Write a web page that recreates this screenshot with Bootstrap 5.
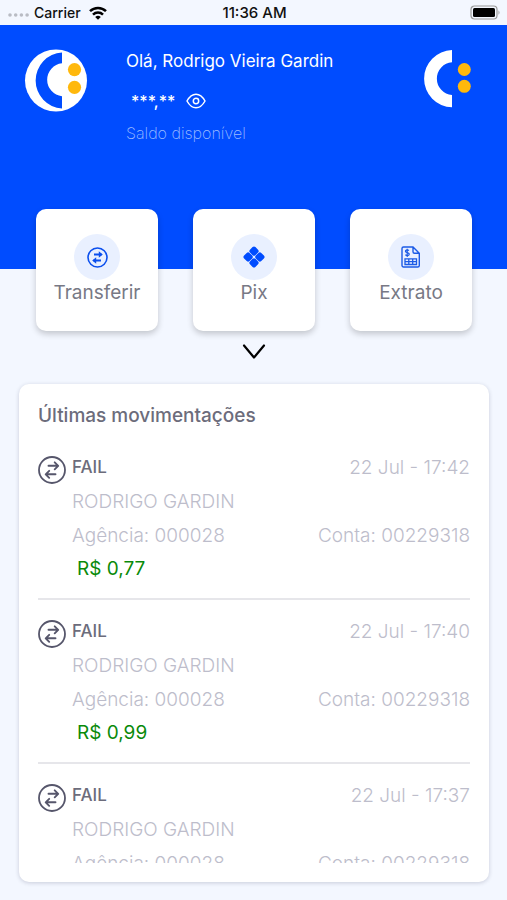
<!DOCTYPE html>
<html lang="pt-BR">
<head>
<meta charset="utf-8">
<meta name="viewport" content="width=device-width, initial-scale=1">
<title>Conta</title>
<link href="https://cdn.jsdelivr.net/npm/bootstrap@5.3.0/dist/css/bootstrap.min.css" rel="stylesheet">
<style>
  body { font-family: Inter, "Liberation Sans", sans-serif; background: #f3f7ff; }
  svg { display: block; flex: none; }
  .status-bar { height: 25px; font-size: 14px; line-height: 25px; font-weight: 500; color: #111; padding: 0 6px 0 8px; }
  .status-side { flex: 1 1 0; }
  .status-time { font-size: 15px; }
  .hero { background: #004cff; color: #fff; height: 244px; padding: 24px 36px 0 24px; }
  .greeting { font-size: 17px; line-height: 24px; padding-left: 38px; }
  .balance { height: 32px; margin-top: 12px; padding-left: 5px; gap: 11px; font-size: 16px; font-weight: 500; }
  .balance-label { font-size: 16px; line-height: 24px; margin-top: 4px; font-weight: 200; color: #9dbcff; }
  .actions { margin-top: -60px; padding: 0 35px 0 36px; gap: 35px; }
  .action-tile { flex: 1 1 0; aspect-ratio: 1; background: #fff; border-radius: 10px; color: #787985; font-size: 19px; line-height: 26px; box-shadow: 0 3px 6px rgba(0,0,0,.2); }
  .action-tile:hover { background: #f8faff; }
  .action-disc { width: 46px; height: 46px; border-radius: 50%; background: #e9f0ff; }
  .expand { margin: 11px auto 23px; }
  .history { margin: 0 18px 18px 19px; padding: 17px 19px 19px; border-radius: 10px; box-shadow: 0 1px 4px rgba(30,35,70,.2); min-height: 0; }
  .history-title { font-size: 19px; line-height: 30px; font-weight: 500; color: #6c6c7b; }
  .entries { min-height: 0; margin-top: 20px; }
  .entry { padding-bottom: 13px; margin-bottom: 15px; border-bottom: 2px solid #e6e6ea; gap: 6px; font-size: 19px; line-height: 34px; font-weight: 300; color: #bdbdcb; }
  .entry-icon { margin-top: 5px; }
  .entry-status { font-size: 17px; line-height: 32px; font-weight: 500; color: #6c6c7b; }
  .entry-amount { font-weight: 400; line-height: 32px; color: #0a8a0a; padding-left: 5px; }
</style>
<script src="https://cdn.jsdelivr.net/npm/bootstrap@5.3.0/dist/js/bootstrap.bundle.min.js" defer></script>
</head>
<body>
<svg width="0" height="0" class="position-absolute" aria-hidden="true">
  <symbol id="swap" viewBox="0 0 28 28">
    <g fill="none" stroke="currentColor" stroke-linecap="round" stroke-linejoin="round">
      <circle cx="14" cy="14" r="13" stroke-width="1.8"/>
      <path stroke-width="1.9" d="M10.500 9.800H20M16.700 6.300l3.500 3.500-3.500 3.500M17.500 18.300H8M11.200 14.800L7.700 18.300l3.500 3.500"/>
    </g>
  </symbol>
</svg>
<div class="vh-100 d-flex flex-column overflow-hidden">
  <div class="status-bar d-flex align-items-center">
    <div class="status-side d-flex align-items-center">
      <svg width="22" height="10" viewBox="0 0 22 10" fill="#b9bcc4"><circle cx="2" cy="7" r="1.8"/><circle cx="7.700" cy="7" r="1.8"/><circle cx="13.400" cy="7" r="1.8"/><circle cx="19.100" cy="7" r="1.8"/></svg>
      <span class="ms-1 me-2">Carrier</span>
      <svg width="18" height="14" viewBox="0 0 18 14" fill="none" stroke="#000" stroke-width="2.500"><path d="M1 5.200a11.500 11.500 0 0 1 16 0M4 8.600a7.200 7.200 0 0 1 10 0"/><path d="M9 13.800L6.200 11a4 4 0 0 1 5.600 0z" fill="#000" stroke="none"/></svg>
    </div>
    <span class="status-time">11:36 AM</span>
    <div class="status-side d-flex justify-content-end">
      <svg width="31" height="15" viewBox="0 0 31 15"><rect x="1" y="1" width="26" height="13" rx="3.500" fill="none" stroke="#999" stroke-width="1.200"/><rect x="3" y="3" width="22" height="9" rx="1.500"/><path d="M28.500 5.200q2 2.300 0 4.600z" fill="#999"/></svg>
    </div>
  </div>

  <header class="hero d-flex align-items-start flex-shrink-0">
    <svg width="64" height="64" viewBox="0 0 64 64" role="img" aria-label="Perfil">
      <circle cx="32" cy="31.500" r="31" fill="#fff"/>
      <path d="M38 3.500A28.050 28.050 0 0 0 38 59.500V47.300A16.650 16.650 0 0 1 38 14.200Z" fill="#004cff"/>
      <circle cx="50.500" cy="20.600" r="6.600" fill="#ffb80c"/><circle cx="50.500" cy="38.300" r="6.600" fill="#ffb80c"/>
    </svg>
    <div class="flex-grow-1">
      <div class="greeting">
        <div>Olá, Rodrigo Vieira Gardin</div>
        <div class="balance d-flex align-items-center">
          <span>***,**</span>
          <button type="button" class="btn p-0 border-0 text-white" aria-label="Mostrar saldo">
            <svg width="20" height="16" viewBox="0 0 20 16" fill="none" stroke="currentColor" stroke-width="1.500"><path d="M1 8C3.500 3.500 6.500 1.200 10 1.200S16.500 3.500 19 8C16.500 12.500 13.500 14.800 10 14.800S3.500 12.500 1 8Z"/><circle cx="10" cy="8" r="2.700"/></svg>
          </button>
        </div>
        <div class="balance-label">Saldo disponível</div>
      </div>
    </div>
    <svg width="48" height="60" viewBox="0 0 48 60" role="img" aria-label="Logotipo">
      <path d="M29 1A28.660 28.660 0 0 0 29 58.300V46A16.400 16.400 0 0 1 29 13.300Z" fill="#fff"/>
      <circle cx="41.300" cy="20.500" r="6.500" fill="#ffb80c"/><circle cx="41.300" cy="37.300" r="6.500" fill="#ffb80c"/>
    </svg>
  </header>

  <nav class="actions d-flex flex-shrink-0" aria-label="Ações">
    <button type="button" class="action-tile btn border-0 p-0 d-flex flex-column align-items-center justify-content-center">
      <span class="action-disc d-flex align-items-center justify-content-center"><svg width="21" height="21" viewBox="0 0 21 21" fill="none" stroke="#0b4fee" stroke-width="1.600"><circle cx="10.500" cy="10.500" r="9.500"/><path d="M7 7.500H14.500M14 13.500H6.500" stroke-width="1.800"/><path d="M11.800 4.300l4 3.200-4 3.200zM9.200 10.300L5.200 13.500l4 3.200z" fill="#0b4fee" stroke="none"/></svg></span>
      Transferir
    </button>
    <button type="button" class="action-tile btn border-0 p-0 d-flex flex-column align-items-center justify-content-center">
      <span class="action-disc d-flex align-items-center justify-content-center"><svg width="22" height="22" viewBox="0 0 22 22" fill="#004cff"><g transform="rotate(45 11 11)"><rect x="3" y="3" width="7.700" height="7.700" rx="2"/><rect x="11.300" y="3" width="7.700" height="7.700" rx="2"/><rect x="3" y="11.300" width="7.700" height="7.700" rx="2"/><rect x="11.300" y="11.300" width="7.700" height="7.700" rx="2"/></g></svg></span>
      Pix
    </button>
    <button type="button" class="action-tile btn border-0 p-0 d-flex flex-column align-items-center justify-content-center">
      <span class="action-disc d-flex align-items-center justify-content-center"><svg width="20" height="22" viewBox="0 0 20 22" fill="none" stroke="#1c5be6" stroke-width="1.400"><path d="M2.500 1H12l6.300 6.300V19.500a1.500 1.500 0 0 1-1.500 1.500H2.500A1.500 1.500 0 0 1 1 19.500v-17A1.500 1.500 0 0 1 2.500 1ZM12 1v4.800a1.500 1.500 0 0 0 1.500 1.500h4.800"/><path d="M8 4.500Q5.800 3 4.600 4.600 4 6.200 6.200 6.700 8.700 7.200 8 8.900 6.500 10.300 4.300 8.800M6.200 2.700V11" stroke-width="1.200"/><path d="M4 12.800h11.500v5.700H4ZM4 15.700h11.500M7.800 12.800v5.700M11.700 12.800v5.700" stroke-width="1.300"/></svg></span>
      Extrato
    </button>
  </nav>

  <button type="button" class="expand btn p-0 border-0 flex-shrink-0 d-flex" aria-label="Mais opções">
    <svg width="24" height="19" viewBox="0 0 24 19" fill="none" stroke="#000" stroke-width="2.200" stroke-linecap="round" stroke-linejoin="round"><path d="M2 3.500L12 15.500 22 3.500"/></svg>
  </button>

  <section class="history bg-white d-flex flex-column flex-grow-1">
    <h1 class="history-title m-0">Últimas movimentações</h1>
    <div class="entries flex-grow-1 overflow-hidden">
      <article class="entry d-flex align-items-start">
        <svg class="entry-icon" width="28" height="28" color="#56566b"><use href="#swap"/></svg>
        <div class="flex-grow-1">
          <div class="d-flex justify-content-between"><span class="entry-status">FAIL</span><span>22 Jul - 17:42</span></div>
          <div>RODRIGO GARDIN</div>
          <div class="d-flex justify-content-between"><span>Agência: 000028</span><span>Conta: 00229318</span></div>
          <div class="entry-amount">R$ 0,77</div>
        </div>
      </article>
      <article class="entry d-flex align-items-start">
        <svg class="entry-icon" width="28" height="28" color="#56566b"><use href="#swap"/></svg>
        <div class="flex-grow-1">
          <div class="d-flex justify-content-between"><span class="entry-status">FAIL</span><span>22 Jul - 17:40</span></div>
          <div>RODRIGO GARDIN</div>
          <div class="d-flex justify-content-between"><span>Agência: 000028</span><span>Conta: 00229318</span></div>
          <div class="entry-amount">R$ 0,99</div>
        </div>
      </article>
      <article class="entry d-flex align-items-start">
        <svg class="entry-icon" width="28" height="28" color="#56566b"><use href="#swap"/></svg>
        <div class="flex-grow-1">
          <div class="d-flex justify-content-between"><span class="entry-status">FAIL</span><span>22 Jul - 17:37</span></div>
          <div>RODRIGO GARDIN</div>
          <div class="d-flex justify-content-between"><span>Agência: 000028</span><span>Conta: 00229318</span></div>
        </div>
      </article>
    </div>
  </section>
</div>
</body>
</html>
